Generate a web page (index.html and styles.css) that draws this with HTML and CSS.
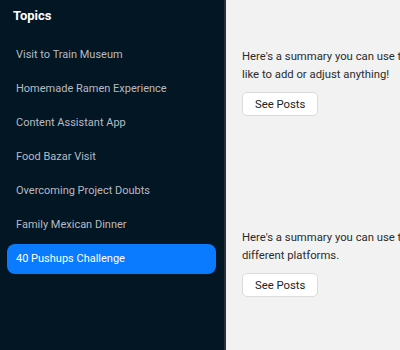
FILE: index.html
```html
<!DOCTYPE html>
<html lang="en">
<head>
    <meta charset="UTF-8">
    <meta name="viewport" content="width=device-width, initial-scale=1.0">
    <title>Topics</title>
    <link rel="stylesheet" href="styles.css">
</head>
<body>
    <div class="layout">
        <aside class="sidebar">
            <h2 class="sidebar-title">Topics</h2>
            <ul class="topic-list">
                <li class="topic">Visit to Train Museum</li>
                <li class="topic">Homemade Ramen Experience</li>
                <li class="topic">Content Assistant App</li>
                <li class="topic">Food Bazar Visit</li>
                <li class="topic">Overcoming Project Doubts</li>
                <li class="topic">Family Mexican Dinner</li>
                <li class="topic active">40 Pushups Challenge</li>
            </ul>
        </aside>

        <main class="content">
            <div class="summary">
                <p class="summary-text">Here's a summary you can use to share your visit on social media. Let me know if you'd<br>like to add or adjust anything!</p>
                <button class="posts-btn">See Posts</button>
            </div>
            <div class="summary">
                <p class="summary-text">Here's a summary you can use to share your pushups challenge across<br>different platforms.</p>
                <button class="posts-btn">See Posts</button>
            </div>
        </main>
    </div>
</body>
</html>
```

FILE: styles.css
```css
body {
    margin: 0;
    font-family: Roboto, "Noto Sans", sans-serif;
    background-color: #f2f2f2;
    overflow: hidden;
}

.layout {
    display: flex;
    height: 350px;
}

/* Sidebar */
.sidebar {
    flex: 0 0 226px;
    background-color: #021624;
    border-right: 2px solid #2a2f35;
    box-sizing: border-box;
    padding: 8px 8px 0 7px;
}

.sidebar-title {
    margin: 0 0 17px 6px;
    font-size: 13px;
    font-weight: 700;
    color: #ffffff;
    line-height: 15px;
}

.topic-list {
    list-style: none;
    margin: 0;
    padding: 0;
    display: flex;
    flex-direction: column;
    gap: 4px;
}

.topic {
    height: 30px;
    line-height: 30px;
    padding-left: 9px;
    font-size: 11px;
    color: #b7bbc2;
    border-radius: 8px;
    white-space: nowrap;
}

.topic.active {
    background-color: #0a7aff;
    color: #ffffff;
}

/* Content */
.content {
    flex: 1;
    min-width: 0;
    padding: 48px 0 0 16px;
    overflow: hidden;
}

.summary {
    height: 181px;
}

.summary-text {
    margin: 0 0 8px 0;
    width: 600px;
    font-size: 11.3px;
    line-height: 18px;
    color: #2b2b2b;
    white-space: nowrap;
}

.posts-btn {
    font-family: inherit;
    font-size: 11.3px;
    color: #222;
    background-color: #ffffff;
    border: 1px solid #dcdcdc;
    border-radius: 5px;
    padding: 0 12px;
    height: 24px;
}
```
